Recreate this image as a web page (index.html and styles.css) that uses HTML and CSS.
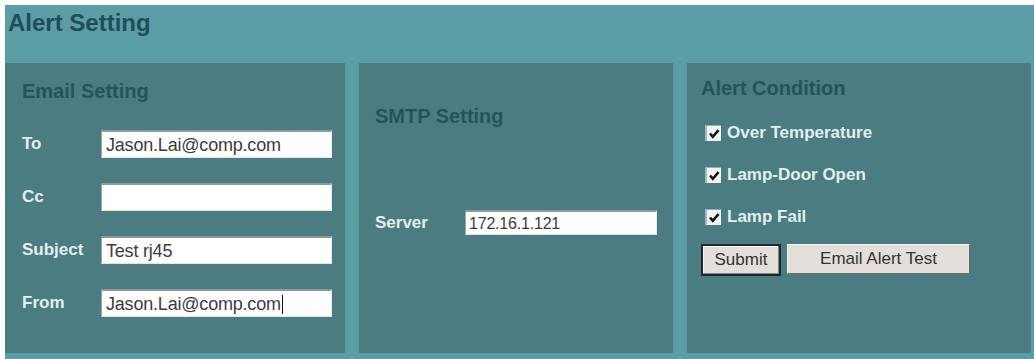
FILE: index.html
```html
<!DOCTYPE html>
<html lang="en">
<head>
<meta charset="utf-8">
<title>Alert Setting</title>
<link rel="stylesheet" href="styles.css">
</head>
<body>
<div class="frame">
  <div class="header"><h1 class="page-title">Alert Setting</h1></div>
  <div class="panels">
    <section class="panel panel-email">
      <h2 class="panel-title">Email Setting</h2>
      <div class="form-rows">
        <div class="form-row"><label class="label">To</label><input class="field" type="text" value="Jason.Lai@comp.com"></div>
        <div class="form-row"><label class="label">Cc</label><input class="field" type="text" value=""></div>
        <div class="form-row"><label class="label">Subject</label><input class="field" type="text" value="Test rj45"></div>
        <div class="form-row"><label class="label">From</label><div class="field field-focus">Jason.Lai@comp.com<span class="caret"></span></div></div>
      </div>
    </section>
    <section class="panel panel-smtp">
      <h2 class="panel-title">SMTP Setting</h2>
      <div class="form-row smtp-row"><label class="label label-server">Server</label><input class="field field-server" type="text" value="172.16.1.121"></div>
    </section>
    <section class="panel panel-alert">
      <h2 class="panel-title">Alert Condition</h2>
      <div class="checks">
        <div class="check-row"><span class="checkbox"><svg width="14" height="14" viewBox="0 0 14 14"><path d="M3 6.5 L5.8 9.8 L11.5 3.2" fill="none" stroke="#111" stroke-width="2.6"/></svg></span><span class="check-label">Over Temperature</span></div>
        <div class="check-row"><span class="checkbox"><svg width="14" height="14" viewBox="0 0 14 14"><path d="M3 6.5 L5.8 9.8 L11.5 3.2" fill="none" stroke="#111" stroke-width="2.6"/></svg></span><span class="check-label">Lamp-Door Open</span></div>
        <div class="check-row"><span class="checkbox"><svg width="14" height="14" viewBox="0 0 14 14"><path d="M3 6.5 L5.8 9.8 L11.5 3.2" fill="none" stroke="#111" stroke-width="2.6"/></svg></span><span class="check-label">Lamp Fail</span></div>
      </div>
      <div class="buttons">
        <button class="btn btn-default" type="button">Submit</button>
        <button class="btn btn-wide" type="button">Email Alert Test</button>
      </div>
    </section>
  </div>
</div>
</body>
</html>
```
FILE: styles.css
```css
* { box-sizing: border-box; }
html, body { margin: 0; padding: 0; background: #ffffff; }
body { font-family: "Liberation Sans", Arial, sans-serif; }

.frame {
  margin: 5px 0 0 5px;
  height: 354px;
  background: #5a9da5;
  display: flex;
  flex-direction: column;
}

.header {
  height: 58px;
  padding: 4px 0 0 3px;
}
.page-title {
  margin: 0;
  font-size: 24px;
  line-height: 28px;
  font-weight: bold;
  color: #1f4d58;
}

.panels {
  display: flex;
  gap: 14px;
  height: 290px;
  padding-right: 3px;
}

.panel {
  background: #4a7c81;
  height: 290px;
}
.panel-email { width: 340px; padding: 17px 0 0 17px; }
.panel-smtp { width: 314px; padding: 42px 0 0 16px; }
.panel-alert { width: 344px; padding: 14px 0 0 14px; }

.panel-title {
  margin: 0;
  font-size: 20px;
  line-height: 23px;
  font-weight: bold;
  color: #25535c;
}

.form-rows {
  margin-top: 27px;
  display: flex;
  flex-direction: column;
  gap: 25px;
}
.form-row {
  display: flex;
  align-items: center;
  height: 28px;
}
.label {
  width: 79px;
  font-size: 17px;
  font-weight: bold;
  color: #e2eff0;
}
.field {
  width: 231px;
  height: 28px;
  margin: 0;
  padding: 1px 0 0 4px;
  background: #ffffff;
  border: 0;
  border-top: 2px solid #8c9a9b;
  border-left: 1px solid #9aa8a9;
  border-right: 1px solid #e4eaea;
  border-bottom: 1px solid #dfe6e6;
  font-family: "Liberation Sans", Arial, sans-serif;
  font-size: 18px;
  letter-spacing: -0.2px;
  color: #3c3c3c;
  outline: none;
}
.field-focus {
  display: flex;
  align-items: center;
  line-height: 24px;
}
.caret {
  display: inline-block;
  width: 1px;
  height: 19px;
  background: #111;
  margin-left: 1px;
}

.smtp-row {
  margin-top: 82px;
  height: 25px;
}
.label-server { width: 90px; }
.field-server {
  width: 192px;
  height: 25px;
  font-size: 16px;
  padding-left: 3px;
}

.checks {
  margin: 23px 0 0 4px;
  display: flex;
  flex-direction: column;
  gap: 22px;
}
.check-row {
  display: flex;
  align-items: center;
  height: 20px;
  gap: 6px;
}
.checkbox {
  width: 16px;
  height: 16px;
  background: #f1f4f4;
  border-top: 1px solid #9aa9aa;
  border-left: 2px solid #aab7b8;
  display: flex;
  align-items: center;
  justify-content: center;
}
.check-label {
  font-size: 17px;
  font-weight: bold;
  color: #e2eff0;
}

.buttons {
  margin-top: 17px;
  display: flex;
  align-items: flex-start;
  gap: 6px;
}
.btn {
  margin: 0;
  font-family: "Liberation Sans", Arial, sans-serif;
  font-size: 17px;
  color: #333333;
  background: #e5dfdc;
  border: 1px solid;
  border-color: #f7f3f1 #6f6a68 #6f6a68 #f7f3f1;
  padding: 0;
}
.btn-default {
  width: 80px;
  height: 32px;
  border: 2px solid #1c2b2d;
  box-shadow: inset -1px -1px 0 #8a8583, inset 1px 1px 0 #faf7f5;
}
.btn-wide {
  width: 183px;
  height: 30px;
}
```
